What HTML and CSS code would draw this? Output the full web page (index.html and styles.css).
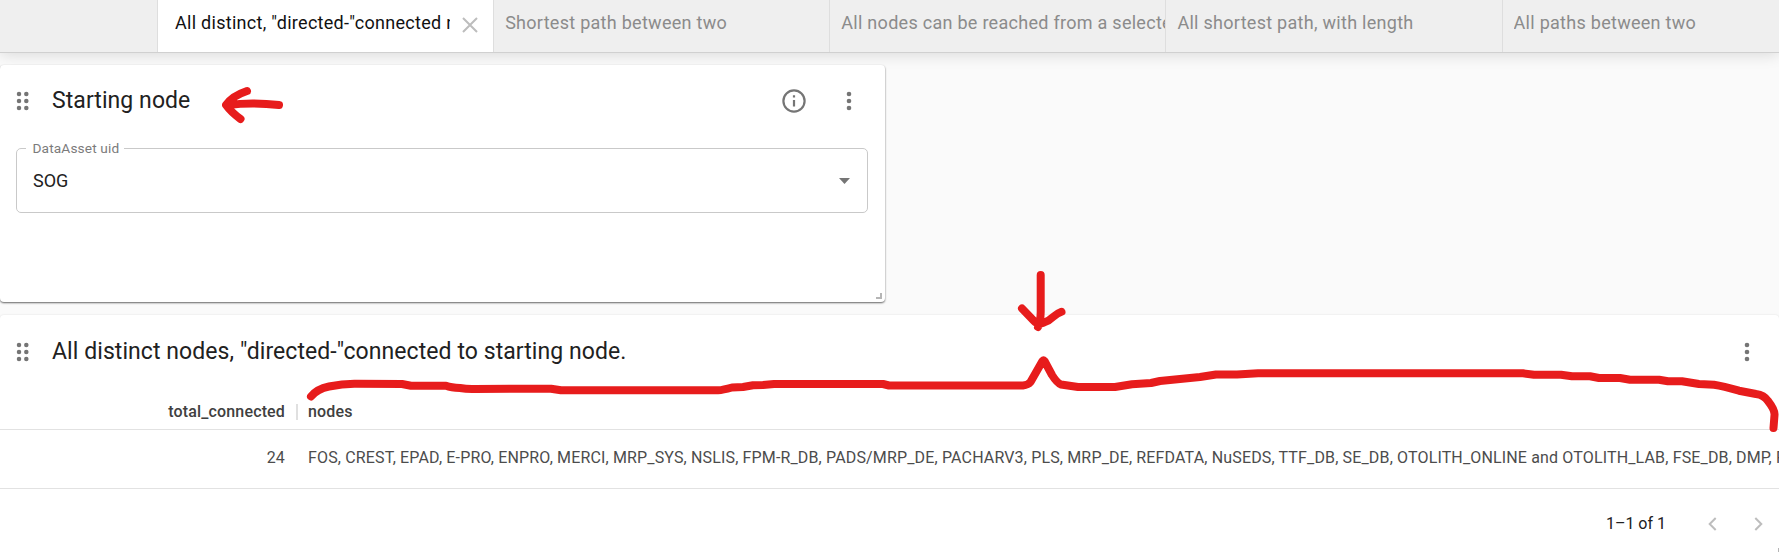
FILE: index.html
```html
<!DOCTYPE html>
<html lang="en">
<head>
<meta charset="utf-8">
<title>Dashboard</title>
<link rel="stylesheet" href="styles.css">
</head>
<body>
<svg class="defs" width="0" height="0">
  <symbol id="kebab" viewBox="0 0 6 20"><circle cx="3" cy="3" r="2.3"/><circle cx="3" cy="10" r="2.3"/><circle cx="3" cy="17" r="2.3"/></symbol>
  <symbol id="drag" viewBox="0 0 13 20"><circle cx="3" cy="3" r="2.25"/><circle cx="3" cy="10" r="2.25"/><circle cx="3" cy="17" r="2.25"/><circle cx="10.3" cy="3" r="2.25"/><circle cx="10.3" cy="10" r="2.25"/><circle cx="10.3" cy="17" r="2.25"/></symbol>
</svg>
<nav class="tabs">
  <div class="tab active"><span class="tab-label t1">All distinct, "directed-"connected nodes</span>
    <svg class="close" viewBox="0 0 16 16" width="16" height="16"><path d="M1 1L15 15M15 1L1 15"/></svg></div>
  <div class="tab"><span class="tab-label">Shortest path between two</span></div>
  <div class="tab"><span class="tab-label">All nodes can be reached from a selected node</span></div>
  <div class="tab"><span class="tab-label">All shortest path, with length</span></div>
  <div class="tab"><span class="tab-label">All paths between two</span></div>
</nav>
<main class="board">
  <section class="card selector">
    <header class="card-head">
      <svg class="drag" width="13" height="20"><use href="#drag"/></svg>
      <h2 class="title">Starting node</h2>
      <svg class="info" viewBox="0 0 24 24" width="24" height="24"><circle cx="12" cy="12" r="10.6"/><path d="M12 11V17.5M12 6.3V8.6"/></svg>
      <svg class="kebab" width="6" height="20"><use href="#kebab"/></svg>
    </header>
    <fieldset class="field">
      <legend class="legend">DataAsset uid</legend>
      <div class="select"><span>SOG</span><svg class="caret" width="11" height="6" viewBox="0 0 11 6"><path d="M0 0H11L5.5 6Z"/></svg></div>
    </fieldset>
    <i class="resize"></i>
  </section>
  <section class="card results">
    <header class="card-head">
      <svg class="drag" width="13" height="20"><use href="#drag"/></svg>
      <h2 class="title">All distinct nodes, "directed-"connected to starting node.</h2>
      <svg class="kebab" width="6" height="20"><use href="#kebab"/></svg>
    </header>
    <div class="row head"><span class="num">total_connected</span><i class="sep"></i><span class="names">nodes</span></div>
    <div class="row data"><span class="num">24</span><i class="sep"></i><span class="names">FOS, CREST, EPAD, E-PRO, ENPRO, MERCI, MRP_SYS, NSLIS, FPM-R_DB, PADS/MRP_DE, PACHARV3, PLS, MRP_DE, REFDATA, NuSEDS, TTF_DB, SE_DB, OTOLITH_ONLINE and OTOLITH_LAB, FSE_DB, DMP, PSC</span></div>
    <footer class="pager"><span>1–1 of 1</span>
      <svg class="chev" width="9" height="14" viewBox="0 0 9 14"><path d="M7.7 1L1.7 7L7.7 13"/></svg>
      <svg class="chev" width="9" height="14" viewBox="0 0 9 14"><path d="M1.3 1L7.3 7L1.3 13"/></svg>
    </footer>
    <i class="resize"></i>
  </section>
</main>
<svg class="marks" viewBox="0 0 1779 552" width="1779" height="552">
  <path d="M247 91Q232 96 226 105Q231 112 240.500 119M228 105Q252 102 279 105"/>
  <path d="M1040.700 275V312Q1040.500 322 1038 327M1022 308.500L1034 321Q1038 325 1044 322.500Q1049 321 1053 317Q1058 313 1061.500 311.800"/>
  <path d="M311 396.500Q317 389 329 386.500Q343 383.500 356 383.700L402 384L411 385.700H446Q451 387.500 460 388Q467 389.300 475 389L551 388.700L561 390.300H718Q723 390 732 387.500L743 387L753 385.300L763 385L774 384H883L889 385.500H1023Q1028 385 1030.500 382L1042.500 361Q1043.500 360 1044.500 361L1052 375Q1057 383 1061 384.500L1078 387H1115L1132 384.300L1151 383L1160 381L1200 377L1216 374.500L1237 374.500L1258 373.300H1523L1534 374.700H1561L1572 376.300H1590L1599 378H1620L1630 379.700H1659L1668 381.300H1682L1699 384L1714 384.700Q1723 386 1739 390.700L1756 394Q1764 395 1768 401Q1775 410 1774.500 415L1773.500 428"/>
</svg>
</body>
</html>
```
FILE: styles.css
```css
* { box-sizing: border-box; }
body {
  margin: 0;
  width: 1779px;
  height: 552px;
  overflow: hidden;
  position: relative;
  background: #fafafa;
  color: #212121;
  font-family: Roboto, "Liberation Sans", sans-serif;
}
.defs { position: absolute; }
.tabs {
  height: 53px;
  padding-left: 157px;
  display: grid;
  grid-template-columns: repeat(5, 336.15px);
  background: #efefef;
  border-bottom: 1px solid #d0d0d0;
  box-shadow: 0 2px 14px rgba(0, 0, 0, .13);
  overflow: visible;
}
.tab {
  display: flex;
  min-width: 0;
  padding-left: 11px;
  border-left: 1px solid #dedede;
  color: #8b8b8b;
  overflow: hidden;
}
.tab.active { background: #fff; color: #111; padding-left: 17px; }
.tab-label {
  font-size: 18px;
  line-height: 24px;
  padding-top: 11px;
  letter-spacing: .28px;
  white-space: nowrap;
  overflow: hidden;
}
.t1 { width: 275px; flex: none; }
.close { margin: 17px 0 0 12px; fill: none; stroke: #bdbdbd; stroke-width: 2; }
.board { display: flex; flex-direction: column; gap: 13px; padding-top: 12px; }
.card { background: #fff; position: relative; border-radius: 4px; }
.selector { width: 885px; height: 237px; box-shadow: 0 1px 2px rgba(0, 0, 0, .6); }
.results { height: 240px; box-shadow: 0 0 2px rgba(0, 0, 0, .12); overflow: hidden; }
.card-head { display: flex; align-items: center; height: 71px; padding: 0 33px 0 16px; }
.results .card-head { padding-right: 29.5px; height: 73px; }
.drag, .kebab { fill: #757575; flex: none; }
.title {
  flex: 1;
  margin: 0 0 0 23px;
  font-size: 23px;
  line-height: 30px;
  letter-spacing: .07px;
  font-weight: 400;
  white-space: nowrap;
}
.info { margin-right: 40px; fill: none; stroke: #757575; stroke-width: 2.2; }
.field {
  margin: 5px 17px 0 16px;
  height: 72px;
  padding: 0;
  border: 1px solid #c9c9c9;
  border-radius: 5px;
}
.legend {
  margin-left: 9px;
  padding: 0 5px 0 6.5px;
  color: #7b7b7b;
  font-size: 13.7px;
  line-height: 15px;
  letter-spacing: .13px;
}
.select {
  display: flex;
  align-items: center;
  justify-content: space-between;
  height: 50px;
  padding: 0 17px 0 16px;
  font-size: 18px;
}
.select span { padding-bottom: 2px; }
.caret { fill: #757575; }
.resize {
  position: absolute;
  right: 3px;
  bottom: 3px;
  width: 6px;
  height: 6px;
  border-right: 2px solid #b5b5b5;
  border-bottom: 2px solid #b5b5b5;
}
.results .resize { right: -1px; bottom: 4px; }
.row {
  display: grid;
  grid-template-columns: 285px 23px 1471px;
  align-items: center;
  border-bottom: 1px solid #e2e2e2;
  font-size: 16px;
  letter-spacing: .15px;
  color: #4c4c4c;
}
.head { height: 42px; padding-top: 6px; font-weight: 500; color: #404040; }
.data { height: 59px; padding-bottom: 3px; }
.num { text-align: right; }
.names { white-space: nowrap; overflow: hidden; }
.sep { justify-self: center; width: 2px; height: 16px; }
.head .sep { background: #e0e0e0; }
.pager { display: flex; align-items: center; justify-content: flex-end; height: 69px; padding-right: 16px; font-size: 16px; }
.chev { fill: none; stroke: #bdbdbd; stroke-width: 2; margin-left: 42px; }
.chev + .chev { margin-left: 37px; }
.results .resize { bottom: 1px; }
.marks {
  position: absolute;
  left: 0;
  top: 0;
  fill: none;
  stroke: #e71c1c;
  stroke-width: 8;
  stroke-linecap: round;
  stroke-linejoin: round;
}
```
